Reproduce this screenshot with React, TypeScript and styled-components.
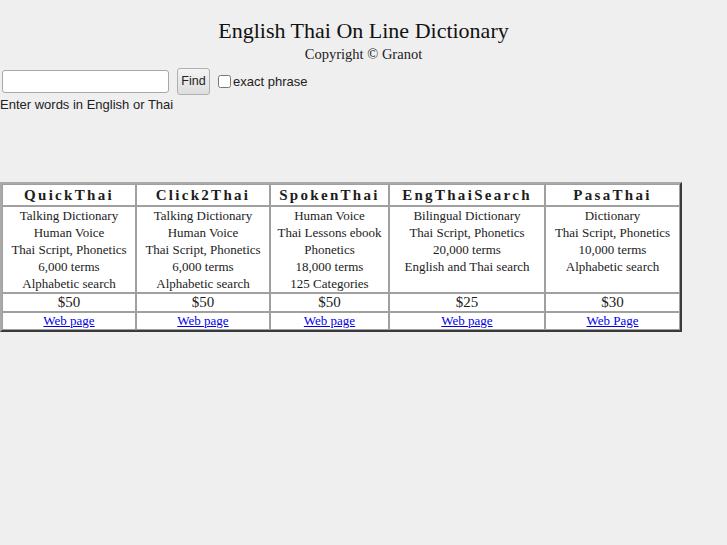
import { FC } from 'react';
import styled, { createGlobalStyle } from 'styled-components';

const GlobalStyle = createGlobalStyle`
  body {
    margin: 0;
    background: #efefef;
    font-family: "Liberation Serif", "Times New Roman", serif;
    color: #111;
  }
`;

type Product = {
  name: string;
  width: number;
  features: string[];
  price: string;
  link: string;
};

const products: Product[] = [
  {
    name: 'QuickThai',
    width: 134,
    features: ['Talking Dictionary', 'Human Voice', 'Thai Script, Phonetics', '6,000 terms', 'Alphabetic search'],
    price: '$50',
    link: 'Web page',
  },
  {
    name: 'Click2Thai',
    width: 134,
    features: ['Talking Dictionary', 'Human Voice', 'Thai Script, Phonetics', '6,000 terms', 'Alphabetic search'],
    price: '$50',
    link: 'Web page',
  },
  {
    name: 'SpokenThai',
    width: 119,
    features: ['Human Voice', 'Thai Lessons ebook', 'Phonetics', '18,000 terms', '125 Categories'],
    price: '$50',
    link: 'Web page',
  },
  {
    name: 'EngThaiSearch',
    width: 156,
    features: ['Bilingual Dictionary', 'Thai Script, Phonetics', '20,000 terms', 'English and Thai search'],
    price: '$25',
    link: 'Web page',
  },
  {
    name: 'PasaThai',
    width: 135,
    features: ['Dictionary', 'Thai Script, Phonetics', '10,000 terms', 'Alphabetic search'],
    price: '$30',
    link: 'Web Page',
  },
];

const App: FC = () => {
  return (
    <>
      <GlobalStyle />
      <Header>
        <Title>English Thai On Line Dictionary</Title>
        <Copyright>Copyright © Granot</Copyright>
      </Header>
      <SearchForm onSubmit={(e) => e.preventDefault()}>
        <SearchRow>
          <SearchInput type="text" />
          <FindButton type="submit">Find</FindButton>
          <CheckLabel>
            <Check type="checkbox" />
            exact phrase
          </CheckLabel>
        </SearchRow>
        <Hint>Enter words in English or Thai</Hint>
      </SearchForm>
      <ProductTable>
        <tbody>
          <tr>
            {products.map((p) => (
              <HeadCell key={p.name} $width={p.width}>
                {p.name}
              </HeadCell>
            ))}
          </tr>
          <tr>
            {products.map((p) => (
              <FeatureCell key={p.name}>
                {p.features.map((f) => (
                  <Feature key={f}>{f}</Feature>
                ))}
              </FeatureCell>
            ))}
          </tr>
          <tr>
            {products.map((p) => (
              <PriceCell key={p.name}>{p.price}</PriceCell>
            ))}
          </tr>
          <tr>
            {products.map((p) => (
              <LinkCell key={p.name}>
                <WebLink href="#">{p.link}</WebLink>
              </LinkCell>
            ))}
          </tr>
        </tbody>
      </ProductTable>
    </>
  );
};

const Header = styled.div`
  text-align: center;
  padding-top: 17px;
`;

const Title = styled.h1`
  margin: 0;
  font-size: 22px;
  font-weight: normal;
  line-height: 28px;
`;

const Copyright = styled.div`
  font-size: 14.5px;
  line-height: 19px;
  color: #222;
`;

const SearchForm = styled.form`
  margin: 4px 0 0;
  font-family: "Liberation Sans", Arial, sans-serif;
  font-size: 13px;
  color: #222;
`;

const SearchRow = styled.div`
  display: flex;
  align-items: center;
  height: 26px;
`;

const SearchInput = styled.input`
  box-sizing: border-box;
  width: 167px;
  height: 23px;
  margin: 0 8px 0 2px;
  border: 1px solid #a8a8a8;
  border-radius: 3px;
  background: #fff;
`;

const FindButton = styled.button`
  box-sizing: border-box;
  width: 33px;
  height: 27px;
  padding: 0;
  border: 1px solid #b0b0b0;
  border-radius: 3px;
  background: linear-gradient(#f4f4f4, #dedede);
  font-family: inherit;
  font-size: 12.5px;
  color: #222;
`;

const CheckLabel = styled.label`
  display: flex;
  align-items: center;
  margin-left: 7px;
`;

const Check = styled.input`
  width: 13px;
  height: 13px;
  margin: 0 2px 0 1px;
`;

const Hint = styled.div`
  margin-top: 2px;
  line-height: 17px;
`;

const ProductTable = styled.table`
  margin: 69px 0 0 0;
  border-collapse: separate;
  border-spacing: 0;
  border: 2px solid;
  border-color: #a9a9a9 #3a3a3a #3a3a3a #a9a9a9;
  background: #fff;
  text-align: center;
  color: #1c1c1c;
`;

const Cell = styled.td`
  border: 1px solid #a0a0a0;
  padding: 0 1px;
  text-align: center;
`;

const HeadCell = styled(Cell)<{ $width: number }>`
  width: ${({ $width }) => $width - 4}px;
  height: 20px;
  font-size: 15px;
  font-weight: bold;
  letter-spacing: 2.3px;
`;

const FeatureCell = styled(Cell)`
  vertical-align: top;
  padding-top: 0;
  padding-bottom: 0;
`;

const Feature = styled.div`
  font-size: 13px;
  line-height: 17px;
`;

const PriceCell = styled(Cell)`
  font-size: 15px;
  height: 15px;
`;

const LinkCell = styled(Cell)`
  font-size: 13px;
  height: 15px;
`;

const WebLink = styled.a`
  color: #0000ee;
`;

export default App;
